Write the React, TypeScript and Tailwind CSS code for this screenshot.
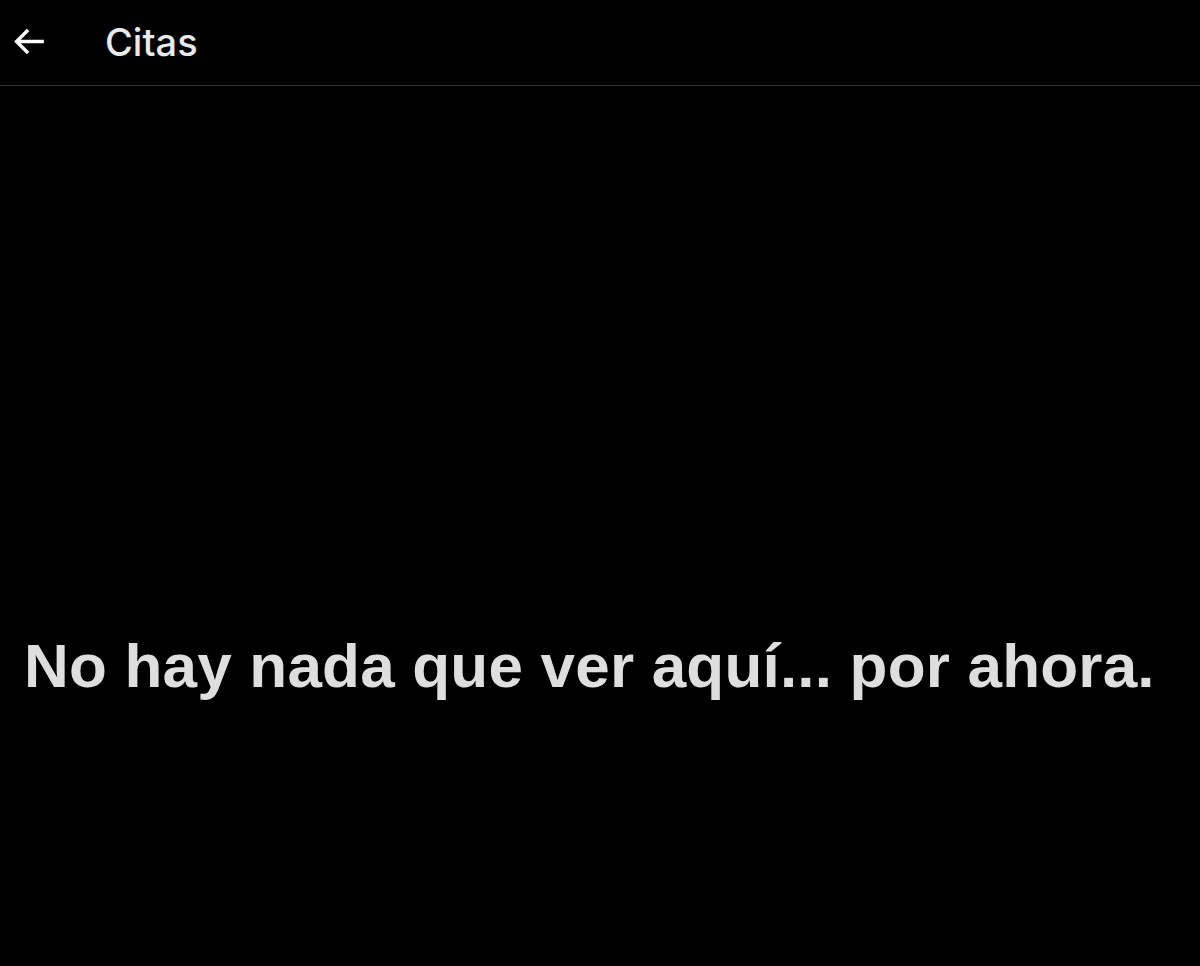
export default function App() {
  return (
    <div className="min-h-[966px] w-full bg-black text-[#e7e9ea]">
      <header className="flex h-[86px] items-center border-b border-[#2f3336] pb-[2px]">
        <button type="button" className="ml-[8px] flex h-[41px] w-[41px] items-center justify-center">
          <svg viewBox="0 0 24 24" className="h-[41px] w-[41px] fill-white">
            <path d="M7.414 13l5.043 5.04-1.414 1.42L3.586 12l7.457-7.46 1.414 1.42L7.414 11H21v2H7.414z" />
          </svg>
        </button>
        <h1 className="ml-[56px] font-['Inter',sans-serif] text-[38px] font-medium leading-none">
          Citas
        </h1>
      </header>
      <main className="pt-[549px] pl-[24px]">
        <p className="font-['Liberation_Sans',Arial,sans-serif] text-[62px] font-bold leading-[62px] tracking-[0.2px] text-[#dedede]">
          No hay nada que ver aquí... por ahora.
        </p>
      </main>
    </div>
  );
}
